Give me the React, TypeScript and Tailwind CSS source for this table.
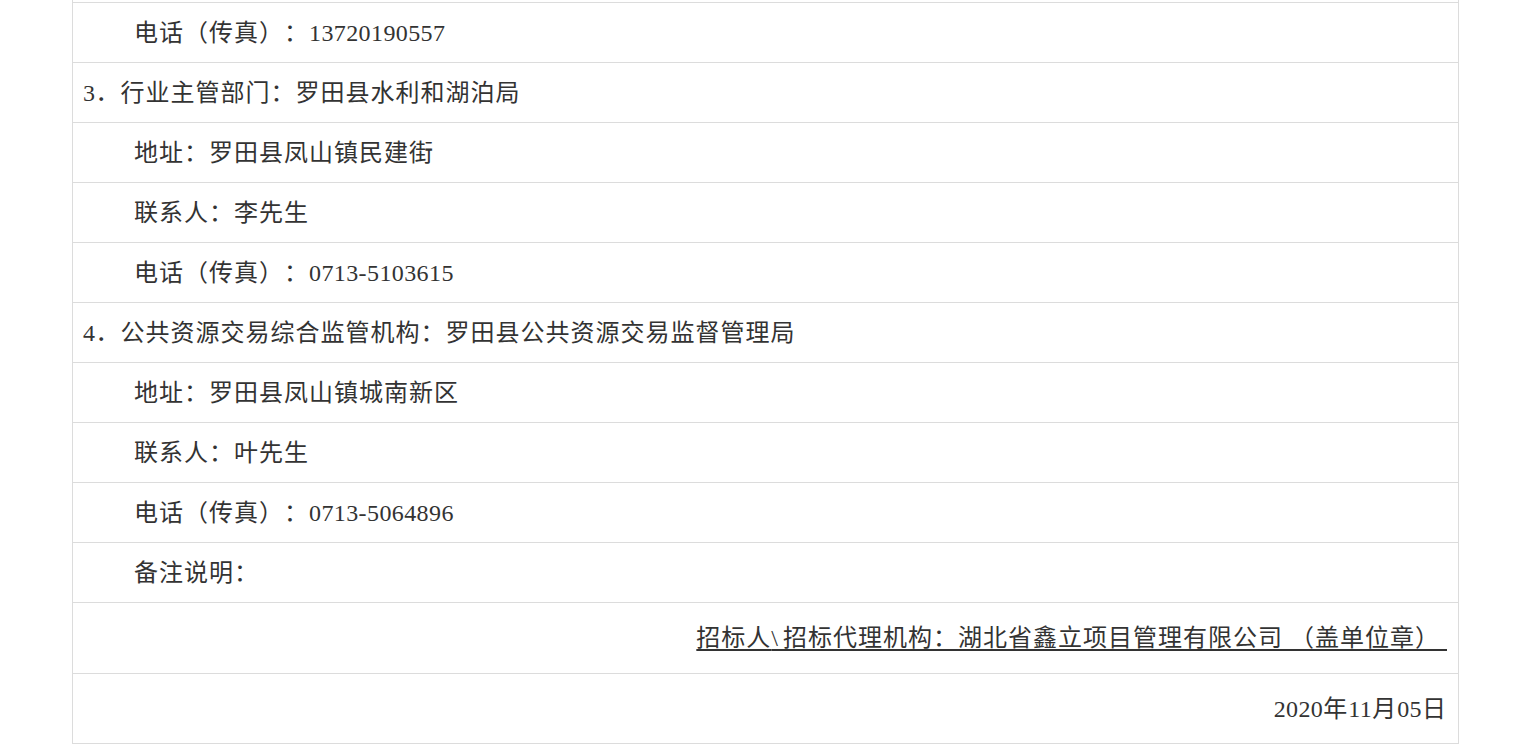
function T({ text }: { text: string }) {
  const parts = text.split(/([0-9][0-9\-]*)/);
  return (
    <>
      {parts.map((p, i) =>
        /^[0-9]/.test(p) ? (
          <span key={i} className="tracking-[0.4px]">
            {p}
          </span>
        ) : (
          <span key={i}>{p}</span>
        )
      )}
    </>
  );
}

export default function App() {
  const rows: { text: string; indent?: boolean }[] = [
    { text: "电话（传真）：13720190557", indent: true },
    { text: "3．行业主管部门：罗田县水利和湖泊局" },
    { text: "地址：罗田县凤山镇民建街", indent: true },
    { text: "联系人：李先生", indent: true },
    { text: "电话（传真）：0713-5103615", indent: true },
    { text: "4．公共资源交易综合监管机构：罗田县公共资源交易监督管理局" },
    { text: "地址：罗田县凤山镇城南新区", indent: true },
    { text: "联系人：叶先生", indent: true },
    { text: "电话（传真）：0713-5064896", indent: true },
    { text: "备注说明：", indent: true },
  ];
  return (
    <div
      className="w-[1536px] h-[748px] bg-white overflow-hidden text-[#333] [text-spacing-trim:space-all]"
      style={{ fontFamily: '"Liberation Serif", "Noto Sans CJK SC", serif' }}
    >
      <div className="ml-[72px] w-[1387px] border-l border-r border-[#dcdcdc]">
        <div className="h-[2px]" />
        {rows.map((r, i) => (
          <div
            key={i}
            className="h-[60px] border-t border-[#dcdcdc] flex items-center pl-[10px] text-[24px] tracking-[1px]"
          >
            <span className={r.indent ? "pl-[51px]" : ""}>
              <T text={r.text} />
            </span>
          </div>
        ))}
        <div className="h-[71px] border-t border-[#dcdcdc] flex items-center justify-end pr-[11px] text-[24px] tracking-[1px]">
          <span className="underline decoration-2 underline-offset-[3px] whitespace-pre">
            {"招标人"}
            <span className="tracking-[5px]">\</span>
            {"招标代理机构：湖北省鑫立项目管理有限公司 （盖单位章） "}
          </span>
        </div>
        <div className="h-[71px] border-t border-b border-[#dcdcdc] flex items-center justify-end pr-[11px] text-[24px] tracking-[1px]">
          <span>
            <T text="2020年11月05日" />
          </span>
        </div>
      </div>
    </div>
  );
}
